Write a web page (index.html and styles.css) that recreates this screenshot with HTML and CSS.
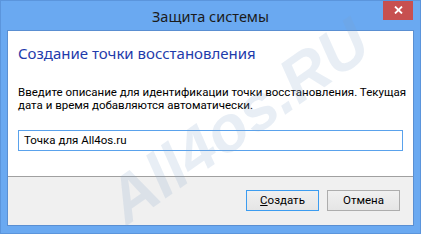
FILE: index.html
```html
<!DOCTYPE html>
<html lang="ru">
<head>
<meta charset="utf-8">
<title>Защита системы</title>
<link rel="stylesheet" href="styles.css">
</head>
<body>
<div class="window">
  <div class="titlebar">
    <span class="spacer"></span>
    <span class="title">Защита системы</span>
    <span class="controls"><span class="close"><svg width="9" height="8" viewBox="0 0 9 8"><path d="M1 0.5 L8 7.5 M8 0.5 L1 7.5" stroke="#fff" stroke-width="1.8"/></svg></span></span>
  </div>
  <div class="client">
    <div class="main">
      <h1 class="heading">Создание точки восстановления</h1>
      <p class="desc">Введите описание для идентификации точки восстановления. Текущая дата и время добавляются автоматически.</p>
      <div class="field">Точка для All4os.ru</div>
    </div>
    <div class="footer">
      <button class="btn btn-default"><u>С</u>оздать</button>
      <button class="btn">Отмена</button>
    </div>
  </div>
  <div class="watermark">All4os.RU</div>
</div>
</body>
</html>
```

FILE: styles.css
```css
html, body {
  margin: 0;
  padding: 0;
  background: #6ba8f0;
}
.window {
  position: relative;
  width: 421px;
  height: 234px;
  box-sizing: border-box;
  border: 1px solid #5b95dc;
  background: #6aa9f1;
  display: flex;
  flex-direction: column;
  padding: 0 6px 7px 6px;
  overflow: hidden;
  font-family: "Noto Sans", "Open Sans", sans-serif;
}
.titlebar {
  height: 29px;
  display: grid;
  grid-template-columns: 1fr auto 1fr;
  align-items: start;
}
.title {
  font-size: 14.5px;
  color: #1b1b1b;
  line-height: 20px;
  padding-top: 5px;
}
.controls {
  display: flex;
  justify-content: flex-end;
}
.close {
  width: 30px;
  height: 20px;
  margin-top: -1px;
  margin-right: 1px;
  background: #c75050;
  display: flex;
  align-items: center;
  justify-content: center;
}
.client {
  flex: 1;
  display: flex;
  flex-direction: column;
  border: 1px solid #5a8fd2;
  background: #f0f0f0;
}
.main {
  background: #fff;
  height: 146px;
  border-bottom: 1px solid #a0a0a0;
  padding: 11px 10px 0 10px;
  box-sizing: border-box;
}
.heading {
  margin: 0;
  font-weight: normal;
  font-size: 15px;
  line-height: 22px;
  color: #1e3bab;
}
.desc {
  margin: 22px -10px 0 0;
  font-family: Roboto, "Noto Sans", sans-serif;
  font-size: 11.5px;
  line-height: 13px;
  color: #000;
}
.field {
  margin-top: 18px;
  height: 21px;
  box-sizing: border-box;
  border: 1px solid #5aa2ec;
  padding: 0 5px;
  font-family: Roboto, "Noto Sans", sans-serif;
  font-size: 11.5px;
  line-height: 19px;
  color: #000;
}
.footer {
  flex: 1;
  display: flex;
  justify-content: flex-end;
  align-items: flex-start;
  gap: 8px;
  padding: 13px 13px 0 0;
}
.btn {
  width: 73px;
  height: 21px;
  box-sizing: border-box;
  border: 1px solid #adadad;
  background: linear-gradient(#f0f0f0, #e5e5e5);
  font-family: Roboto, "Noto Sans", sans-serif;
  font-size: 11.5px;
  line-height: 17px;
  color: #000;
  padding: 0;
}
.btn-default {
  border-color: #3c9cf0;
}
.btn u {
  text-decoration: underline;
  text-underline-offset: 1px;
}
.watermark {
  position: absolute;
  left: 128px;
  top: 170px;
  font-family: "Liberation Sans", sans-serif;
  font-style: italic;
  font-weight: bold;
  font-size: 64px;
  line-height: 64px;
  color: rgba(130, 160, 200, 0.18);
  transform: rotate(-35deg);
  transform-origin: 0 58px;
  white-space: nowrap;
  pointer-events: none;
}
```
